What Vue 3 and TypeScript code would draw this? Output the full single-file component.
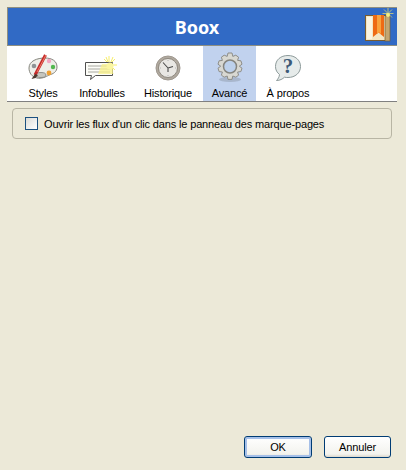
<script setup lang="ts">
const tabs = [
  { id: 'styles', label: 'Styles', width: 56 },
  { id: 'info', label: 'Infobulles', width: 62 },
  { id: 'hist', label: 'Historique', width: 70 },
  { id: 'adv', label: 'Avancé', width: 53 },
  { id: 'about', label: 'À propos', width: 64 },
]
</script>

<template>
  <div class="dialog">
    <header class="banner">
      <h1 class="title">Boox</h1>
      <svg class="logo" width="30" height="34" viewBox="0 0 30 34">
        <path d="M24 0v11M18.500 5.500h11M20 1.500l8 8M28 1.500l-8 8" stroke="#d8d478" stroke-width="1" opacity=".8" />
        <rect x="1.500" y="7.500" width="23" height="25" fill="#f3e6c4" stroke="#7a5c2e" />
        <rect x="3" y="9" width="5" height="22" fill="#fbf4e0" />
        <rect x="21" y="8" width="5" height="25" fill="#c4a670" stroke="#7a5c2e" stroke-width=".7" />
        <path d="M9 7h11v22l-5.500-4.500L9 29z" fill="#ee6a14" />
        <path d="M13 7h4v19l-2-1.700-2 1.700z" fill="#f9a23c" />
        <circle cx="24" cy="7" r="2" fill="#f6ee80" />
      </svg>
    </header>
    <nav class="tabs">
      <div
        v-for="tab in tabs"
        :key="tab.id"
        class="tab"
        :class="{ active: tab.id === 'adv' }"
        :style="{ width: tab.width + 'px' }"
      >
        <svg v-if="tab.id === 'styles'" class="icon" width="32" height="32" viewBox="0 0 32 32">
          <path d="M2 17C2 10 10 7 18 7c7 0 12 3 12 9 0 5-4 7-8 8-3 2-8 4-12 3-5-1-8-5-8-10z" fill="#eeeee8" stroke="#85857d" />
          <ellipse cx="14" cy="24" rx="5" ry="2.500" fill="#c6c6be" stroke="#7f7f78" stroke-width=".8" />
          <circle cx="7" cy="15" r="2.300" fill="#8e9294" />
          <circle cx="22" cy="10" r="2.200" fill="#f2a4c2" />
          <circle cx="26" cy="16" r="2.200" fill="#52b84f" />
          <circle cx="22" cy="22" r="2.400" fill="#efa032" />
          <circle cx="15" cy="10" r="1.500" fill="#dfe0d8" />
          <path d="M18.500 4 8 24" stroke="#c42a2a" stroke-width="3" />
          <path d="M19 4 10 21" stroke="#ee7a68" stroke-width="1" />
          <path d="M8 23 4.500 28l4-1 2.500-3z" fill="#4d3a30" />
        </svg>
        <svg v-else-if="tab.id === 'info'" class="icon" width="34" height="32" viewBox="0 0 34 32">
          <path d="M24 5v20M17 14h15M19 8l11 11M30 8 19 19M21 6l7 17M28 6l-7 17" stroke="#f7ee6a" stroke-width="1" />
          <path d="M.500 11.500h27v13h-17l-5 4 1-4h-6z" fill="#fdfdf8" stroke="#505050" />
          <path d="M3 15h22M3 18h22M3 21h22" stroke="#a8a8a0" />
          <path d="M17 13h11v10H13z" fill="#f9f28a" opacity=".75" />
          <circle cx="25" cy="15" r="3.500" fill="#fbf6a0" />
        </svg>
        <svg v-else-if="tab.id === 'hist'" class="icon" width="26" height="32" viewBox="0 0 26 32">
          <circle cx="13" cy="17" r="12" fill="#b0a99f" stroke="#a09990" />
          <circle cx="13" cy="17" r="9.500" fill="#e9e7e3" stroke="#7f786f" stroke-width=".8" />
          <path d="M13 17 8 11.500M13 17l5-1.500M13 17v4" stroke="#4a4a4a" stroke-width="1.100" fill="none" />
          <path d="M13 9v1M13 24v1M5 17h1M20 17h1" stroke="#b5b5b5" />
        </svg>
        <svg v-else-if="tab.id === 'adv'" class="icon" width="30" height="32" viewBox="0 0 30 32">
          <ellipse cx="15" cy="28.500" rx="11" ry="2.500" fill="#9daabd" opacity=".7" />
          <path d="M13 2h4l.8 3.400 3-1.200 2.800 2-1 3.200 3.300.4 1.100 3.400-2.700 2 2.700 2-1.100 3.400-3.300.4 1 3.200-2.800 2-3-1.200-.8 3.400h-4l-.8-3.400-3 1.200-2.800-2 1-3.200-3.300-.4-1.100-3.400 2.700-2-2.700-2 1.100-3.400 3.300-.4-1-3.200 2.800-2 3 1.200z" fill="#d8d8d2" stroke="#8d8d88" />
          <circle cx="15" cy="15.500" r="6.500" fill="#bdd1ec" stroke="#85857f" stroke-width="1.500" />
        </svg>
        <svg v-else class="icon" width="28" height="32" viewBox="0 0 28 32">
          <path d="M14 4.500C6.500 4.500 1.500 9 1.500 15.500c0 3.500 1.500 6 4 8-.2 2.500-1.500 4.500-3 6 3.500 0 6-1.500 8-3.300 1 .3 2.500.3 3.500.3 7 0 12.500-4.500 12.500-11S21 4.500 14 4.500z" fill="#e6ebea" stroke="#8d9a9a" />
          <text x="14" y="22" text-anchor="middle" class="question">?</text>
        </svg>
        <span class="label">{{ tab.label }}</span>
      </div>
    </nav>
    <section class="group">
      <label class="option">
        <span class="box"></span>
        <span>Ouvrir les flux d'un clic dans le panneau des marque-pages</span>
      </label>
    </section>
    <footer class="actions">
      <button class="btn default">OK</button>
      <button class="btn">Annuler</button>
    </footer>
  </div>
</template>

<style>
html, body { margin: 0; background: #ece9d8; }
</style>

<style scoped>
.dialog {
  box-sizing: border-box;
  width: 406px;
  height: 470px;
  padding: 7px 9px 12px 7px;
  background: #ece9d8;
  display: flex;
  flex-direction: column;
  font-family: "Liberation Sans", sans-serif;
  font-size: 11px;
  letter-spacing: -0.15px;
  color: #000;
}
.banner {
  box-sizing: border-box;
  height: 39px;
  flex: none;
  background: #316ac5;
  border-top: 1px solid #8f8f80;
  border-left: 1px solid #8f8f80;
  border-bottom: 1px solid #8f8f80;
  padding-right: 11px;
  position: relative;
  display: flex;
  align-items: center;
  justify-content: center;
}
.title {
  margin: 0;
  color: #fff;
  font-size: 18px;
  font-weight: 700;
  letter-spacing: 0;
  font-family: "Noto Sans", sans-serif;
}
.logo {
  position: absolute;
  right: 3px;
  top: 0;
}
.tabs {
  box-sizing: border-box;
  height: 56px;
  flex: none;
  padding-left: 8px;
  background: #fff;
  border-bottom: 1px solid #808080;
  display: flex;
  align-items: stretch;
}
.tab {
  box-sizing: border-box;
  flex: none;
  height: 55px;
  display: flex;
  flex-direction: column;
  align-items: center;
}
.tab.active { background: #c1d2ee; }
.icon {
  margin-top: 5px;
  height: 32px;
  flex: none;
}
.label {
  margin-top: 3px;
  line-height: 14px;
  white-space: nowrap;
}
.question {
  font-family: "Liberation Serif", serif;
  font-size: 21px;
  font-weight: 700;
  fill: #3c5a78;
}
.group {
  box-sizing: border-box;
  flex: none;
  height: 31px;
  margin: 6px 5px 0 5px;
  border: 1px solid #b8b5a4;
  border-radius: 4px;
  display: flex;
  align-items: center;
  padding-left: 12px;
}
.option {
  display: flex;
  align-items: center;
  gap: 6px;
  white-space: nowrap;
}
.box {
  box-sizing: border-box;
  width: 13px;
  height: 13px;
  border: 1px solid #1c5180;
  background: linear-gradient(135deg, #dcdcd7, #fff);
}
.actions {
  margin-top: auto;
  display: flex;
  justify-content: flex-end;
  gap: 12px;
  padding-right: 6px;
}
.btn {
  box-sizing: border-box;
  width: 67px;
  height: 22px;
  padding: 0;
  border: 1px solid #003c74;
  border-radius: 3px;
  background: linear-gradient(#fff, #f3f3ee 85%, #dcd7cb);
  font: inherit;
  letter-spacing: inherit;
  color: #000;
}
.btn.default {
  width: 68px;
  box-shadow: inset 0 0 0 2px #a6c0e8;
}
</style>
